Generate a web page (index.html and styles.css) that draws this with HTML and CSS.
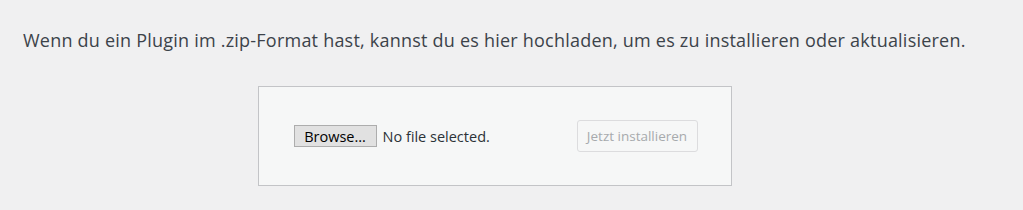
FILE: index.html
```html
<!DOCTYPE html>
<html lang="de">
<head>
    <meta charset="UTF-8">
    <title>Plugin hochladen</title>
    <link rel="stylesheet" href="styles.css">
</head>
<body>
    <div class="upload-plugin">
        <p class="install-help">Wenn du ein Plugin im .zip-Format hast, kannst du es hier hochladen, um es zu installieren oder aktualisieren.</p>
        <form class="wp-upload-form">
            <div class="file-field">
                <button type="button" class="browse-btn">Browse...</button>
                <span class="file-name">No file selected.</span>
            </div>
            <button type="submit" class="install-btn" disabled>Jetzt installieren</button>
        </form>
    </div>
</body>
</html>
```

FILE: styles.css
```css
body {
    margin: 0;
    background-color: #f0f0f1;
    font-family: "Open Sans", "Noto Sans", sans-serif;
    color: #3c434a;
}

.upload-plugin {
    width: 943px;
    padding: 0 0 0 23px;
    text-align: center;
}

.install-help {
    margin: 0;
    padding-top: 28px;
    font-size: 18px;
    line-height: 24px;
    letter-spacing: 0.22px;
    white-space: nowrap;
    text-align: left;
}

.wp-upload-form {
    display: inline-flex;
    align-items: center;
    justify-content: space-between;
    box-sizing: border-box;
    width: 474px;
    height: 100px;
    margin-top: 34px;
    padding: 0 33px 0 35px;
    background-color: #f6f7f7;
    border: 1px solid #c3c4c7;
}

.file-field {
    display: flex;
    align-items: center;
    gap: 6px;
}

.browse-btn {
    box-sizing: border-box;
    width: 83px;
    height: 22px;
    padding: 0;
    background-color: #e1e1e1;
    border: 1px solid #adadad;
    color: #000;
    font-family: "Open Sans", "Noto Sans", sans-serif;
    font-size: 14.5px;
}

.file-name {
    font-size: 14.5px;
    color: #2c3338;
}

.install-btn {
    box-sizing: border-box;
    width: 121px;
    height: 32px;
    padding: 0;
    white-space: nowrap;
    background-color: #f6f7f7;
    border: 1px solid #dcdcde;
    border-radius: 3px;
    color: #a7aaad;
    font-family: "Open Sans", "Noto Sans", sans-serif;
    font-size: 13.5px;
}
```
